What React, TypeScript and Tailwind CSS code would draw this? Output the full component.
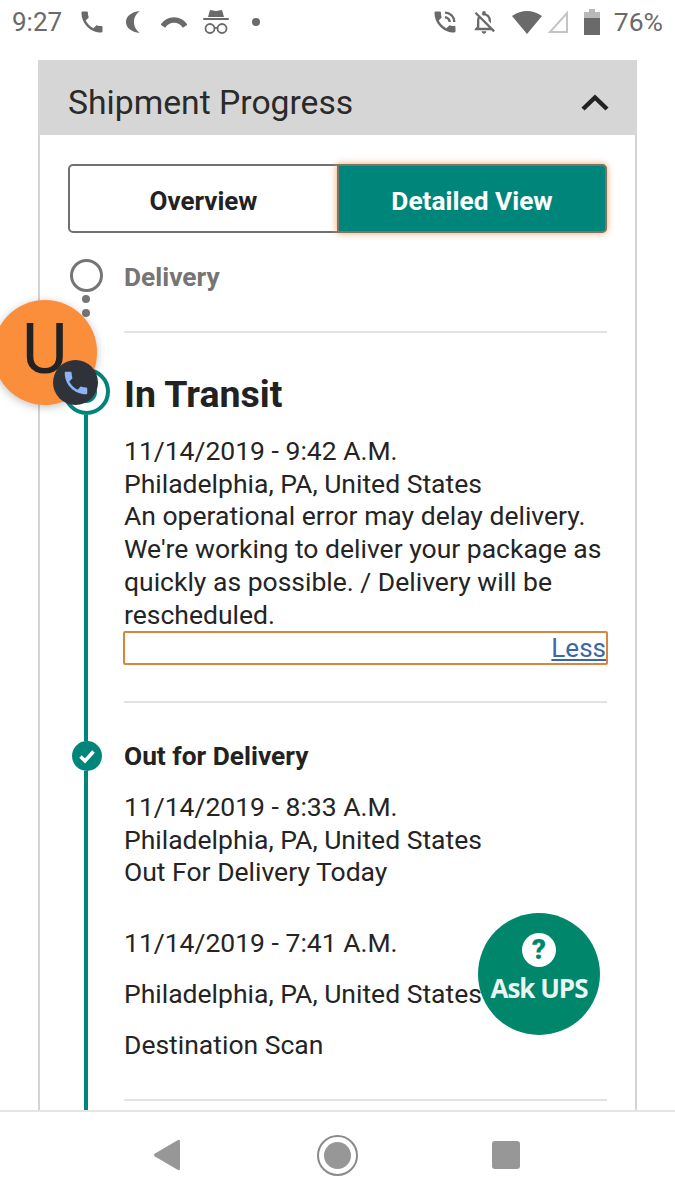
import {
  MdPhone,
  MdPhoneInTalk,
  MdOutlineNotificationsOff,
} from 'react-icons/md';

const font = { fontFamily: 'Roboto, sans-serif' };

function StatusBar() {
  return (
    <div className="flex h-[60px] shrink-0 items-center pb-[16px] text-[#6a6a6a]">
      <span className="ml-[12px] w-[52px] text-[26px] leading-none">9:27</span>
      <MdPhone className="ml-[14px] h-[28px] w-[28px]" />
      <svg viewBox="0 0 16 22" className="ml-[20px] h-[22px] w-[16px]" fill="currentColor">
        <path d="M14 0C5 1 0 5.500 0 11s5 10 14 11c-3-2-6-5.500-6-11s3-9 6-11z" />
      </svg>
      <svg viewBox="0 0 28 14" className="ml-[19px] h-[14px] w-[26px]" fill="none" stroke="currentColor">
        <path d="M2 11.500 C8 2.500 20 2.500 26 11.500" strokeWidth="6" />
      </svg>
      <svg viewBox="0 0 28 26" className="ml-[15px] h-[26px] w-[28px]" fill="currentColor">
        <path d="M8 1l6 1 6-1 2 7H6z" />
        <rect x="1" y="9" width="26" height="2" rx="1" />
        <circle cx="8" cy="19.500" r="4.500" fill="none" stroke="currentColor" strokeWidth="1.800" />
        <circle cx="20" cy="19.500" r="4.500" fill="none" stroke="currentColor" strokeWidth="1.800" />
        <rect x="12" y="18" width="4" height="1.800" />
      </svg>
      <span className="ml-[22px] h-[8px] w-[8px] rounded-full bg-[#6a6a6a]" />
      <div className="flex-1" />
      <MdPhoneInTalk className="h-[28px] w-[28px]" />
      <MdOutlineNotificationsOff className="ml-[11px] h-[28px] w-[28px]" />
      <svg viewBox="0 0 30 24" className="ml-[14px] h-[24px] w-[30px]" fill="currentColor">
        <path d="M0 6 Q15 -4 30 6 L15 24z" />
      </svg>
      <svg viewBox="0 0 22 24" className="ml-[5px] h-[24px] w-[22px]" fill="none" stroke="#c4c4c4" strokeWidth="2">
        <path d="M20 3 V22 H3z" />
      </svg>
      <svg viewBox="0 0 16 26" className="ml-[15px] h-[26px] w-[16px]">
        <path d="M5 0h6v3h5v6H0V3h5z" fill="#b9b9b9" />
        <rect x="0" y="9" width="16" height="17" fill="#6a6a6a" />
      </svg>
      <span className="ml-[14px] mr-[12px] text-[26.500px] leading-none">76%</span>
    </div>
  );
}

function ViewTabs() {
  return (
    <div className="mx-[28px] mt-[29px] flex h-[69px] rounded-[5px] border-2 border-[#707070] bg-white">
      <div className="flex w-[267px] items-center justify-center pt-[6px] text-[26px] font-bold text-[#222]">
        Overview
      </div>
      <div className="-my-[2px] -mr-[2px] flex flex-1 items-center justify-center rounded-r-[5px] border-2 border-[#7d7468] bg-[#00857a] pt-[6px] text-[26.300px] font-bold text-white shadow-[0_0_7px_#f0a060]">
        Detailed View
      </div>
    </div>
  );
}

function TextLines({ lines }: { lines: string[] }) {
  return (
    <div className="text-[26.500px] leading-[32.700px] text-[#242424]">
      {lines.map((line) => (
        <p key={line}>{line}</p>
      ))}
    </div>
  );
}

function Timeline() {
  return (
    <div className="flex min-h-0 flex-1 flex-col overflow-hidden pl-[28px] pr-[28px]">
      {/* Delivery */}
      <div className="flex h-[135px] pt-[26px]">
        <div className="flex w-[36px] flex-col items-center">
          <span className="h-[33px] w-[33px] rounded-full border-[3.500px] border-[#757575]" />
          <span className="mt-[3px] h-[8px] w-[8px] rounded-full bg-[#757575]" />
          <span className="mt-[6px] h-[8px] w-[8px] rounded-full bg-[#757575]" />
        </div>
        <div className="ml-[20px] flex-1">
          <p className="text-[26.300px] font-bold leading-[36px] text-[#757575]">Delivery</p>
          <div className="mt-[36px] h-[2px] bg-[#e3e3e3]" />
        </div>
      </div>

      {/* In Transit */}
      <div className="flex h-[370px]">
        <div className="-ml-[6px] mr-[-6px] flex w-[48px] flex-col items-center">
          <span className="flex h-[47px] w-[47px] shrink-0 items-center justify-center rounded-full border-[4px] border-[#00857a]">
            <span className="h-[22px] w-[22px] rounded-full bg-[#00857a]" />
          </span>
          <span className="w-[4px] flex-1 bg-[#00857a]" />
        </div>
        <div className="ml-[20px] min-w-0 flex-1 pt-[4px]">
          <h2 className="text-[37.500px] font-bold leading-[44px] text-[#222]">In Transit</h2>
          <div className="mt-[19px]">
            <TextLines
              lines={[
                '11/14/2019 - 9:42 A.M.',
                'Philadelphia, PA, United States',
                'An operational error may delay delivery.',
                "We're working to deliver your package as",
                'quickly as possible. / Delivery will be',
                'rescheduled.',
              ]}
            />
          </div>
          <div className="-ml-px -mr-px flex h-[34px] items-center justify-end rounded-[2px] border-2 border-[#d9853b]">
            <a className="text-[26px] leading-none text-[#3b66aa] underline">Less</a>
          </div>
          <div className="mt-[36px] h-[2px] bg-[#e3e3e3]" />
        </div>
      </div>

      {/* Out for Delivery */}
      <div className="flex flex-1">
        <div className="flex w-[36px] flex-col items-center">
          <span className="h-[3px] w-[4px] bg-[#00857a]" />
          <span className="ml-[2px] flex h-[30px] w-[30px] shrink-0 items-center justify-center rounded-full bg-[#00857a]">
            <svg viewBox="0 0 20 20" className="h-[20px] w-[20px]" fill="none" stroke="#fff" strokeWidth="3.500">
              <path d="M3.500 10.500 L8 15 L16.500 5.500" />
            </svg>
          </span>
          <span className="w-[4px] flex-1 bg-[#00857a]" />
        </div>
        <div className="ml-[20px] min-w-0 flex-1">
          <p className="text-[26.300px] font-bold leading-[36px] text-[#222]">Out for Delivery</p>
          <div className="mt-[17px]">
            <TextLines
              lines={[
                '11/14/2019 - 8:33 A.M.',
                'Philadelphia, PA, United States',
                'Out For Delivery Today',
              ]}
            />
          </div>
          <div className="mt-[37px] flex flex-col gap-[18px] text-[26.500px] leading-[33px] text-[#242424]">
            <p>11/14/2019 - 7:41 A.M.</p>
            <p>Philadelphia, PA, United States</p>
            <p>Destination Scan</p>
          </div>
          <div className="mt-[38px] h-[2px] bg-[#e3e3e3]" />
        </div>
      </div>
    </div>
  );
}

function NavBar() {
  return (
    <div className="flex h-[90px] shrink-0 items-center border-t-2 border-[#e4e4e4] bg-white pb-[2px]">
      <svg viewBox="0 0 28 32" className="ml-[153px] h-[32px] w-[28px]" fill="#979797">
        <path d="M25 1 Q27 0 27 3 V29 Q27 32 25 31 L2 17.500 Q0 16 2 14.500z" />
      </svg>
      <span className="ml-[136px] flex h-[41px] w-[41px] items-center justify-center rounded-full border-2 border-[#8a8a8a]">
        <span className="h-[27px] w-[27px] rounded-full bg-[#979797]" />
      </span>
      <span className="ml-[134px] h-[28px] w-[28px] rounded-[3px] bg-[#979797]" />
    </div>
  );
}

export default function App() {
  return (
    <div className="relative flex h-[1200px] w-[675px] flex-col overflow-hidden bg-white" style={font}>
      <StatusBar />
      <main className="flex min-h-0 flex-1 flex-col pl-[38px] pr-[38px]">
        <div className="flex h-[75px] shrink-0 items-center justify-between bg-[#d6d6d6] pl-[30px] pr-[28px]">
          <h1 className="pt-[12px] text-[33.700px] font-normal text-[#2a2a2a]">Shipment Progress</h1>
          <svg viewBox="0 0 28 17" className="mt-[10px] h-[17px] w-[28px]" fill="none" stroke="#222" strokeWidth="4.500">
            <path d="M2 15 L14 3.500 L26 15" />
          </svg>
        </div>
        <div className="flex min-h-0 flex-1 flex-col border-x-2 border-[#d4d4d4]">
          <ViewTabs />
          <Timeline />
        </div>
      </main>
      <NavBar />

      {/* floating call bubble */}
      <div className="absolute left-[-7px] top-[300px] h-[105px] w-[104px] rounded-full bg-[#fb8e3a] shadow-[0_2px_8px_rgba(0,0,0,0.25)]">
        <span className="absolute left-[29px] top-[9px] text-[70px] font-normal leading-[80px] text-[#222]">U</span>
      </div>
      <div className="absolute left-[53px] top-[360px] flex h-[45px] w-[45px] items-center justify-center rounded-full bg-[#30323a]">
        <MdPhone className="h-[30px] w-[30px] text-[#8ab4f8]" />
      </div>

      {/* Ask UPS chat button */}
      <div className="absolute left-[478px] top-[913px] flex h-[122px] w-[122px] flex-col items-center rounded-full bg-[#00866b] pt-[20px]">
        <span className="flex h-[34px] w-[34px] items-center justify-center rounded-full bg-white text-[28px] font-black leading-none text-[#00866b]">
          ?
        </span>
        <span className="mt-[5px] whitespace-nowrap text-[26px] font-bold leading-[32px] tracking-[-1px] text-[#e9f5f1]" style={{ fontFamily: '"Open Sans", sans-serif' }}>
          Ask UPS
        </span>
      </div>
    </div>
  );
}
